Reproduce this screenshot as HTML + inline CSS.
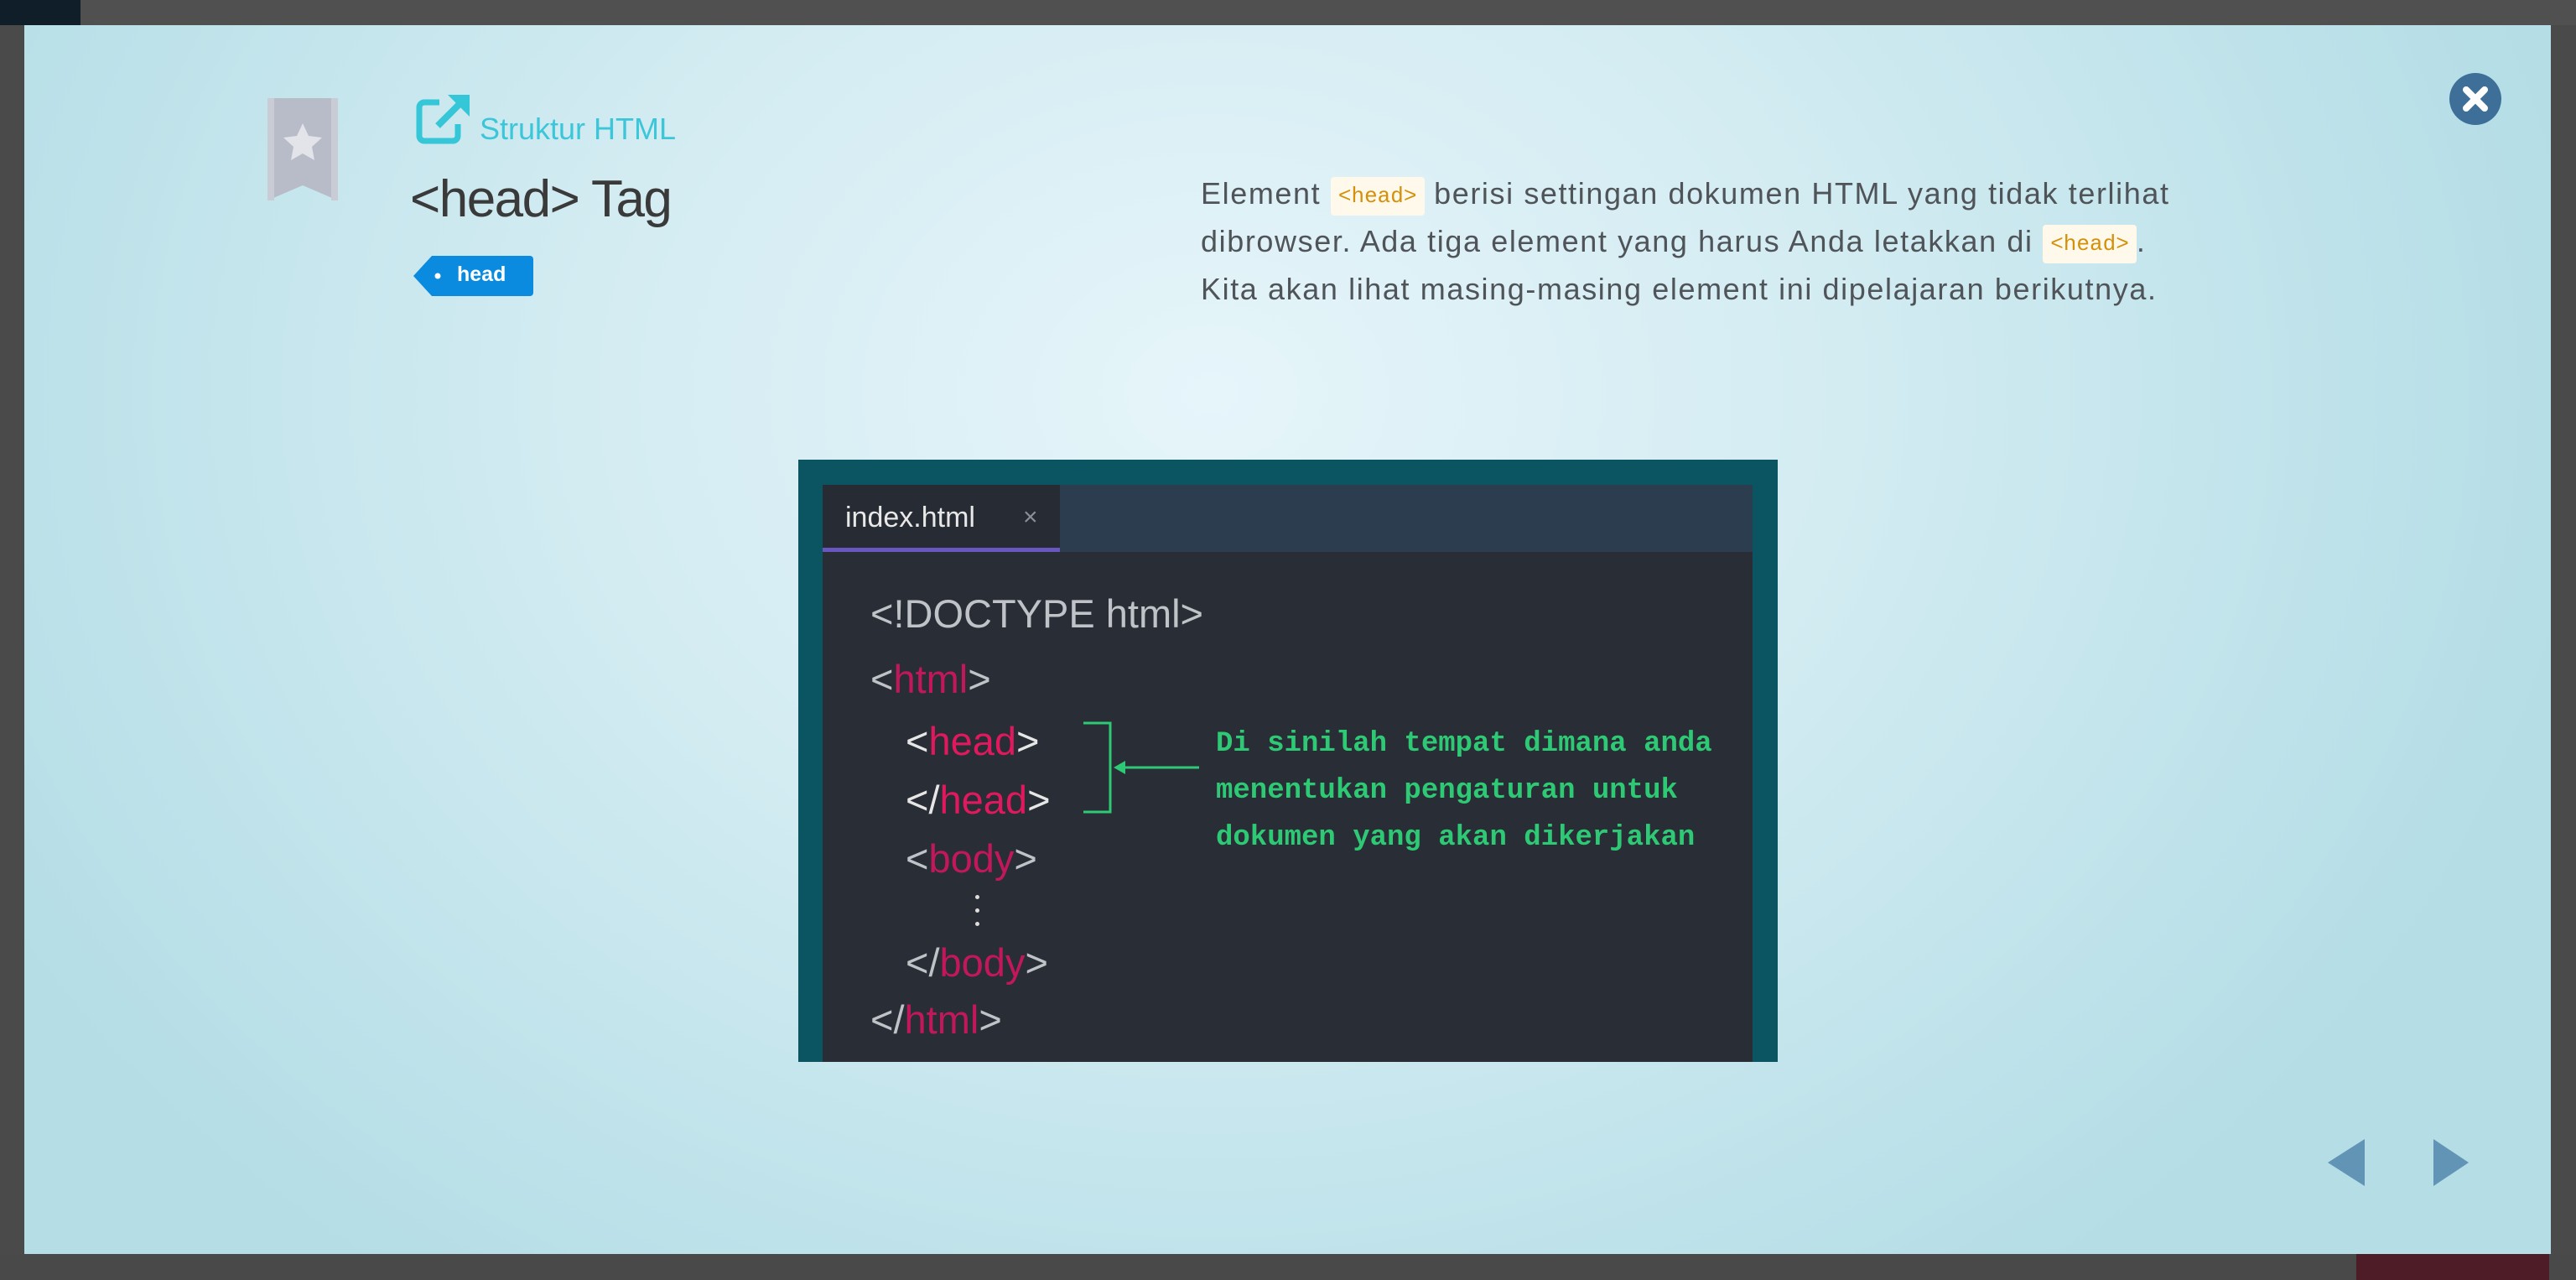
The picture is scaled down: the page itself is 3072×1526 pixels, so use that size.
<!DOCTYPE html>
<html><head><meta charset="utf-8"><style>
*{margin:0;padding:0;box-sizing:border-box}
body{width:3072px;height:1526px;overflow:hidden;background:#4a4a4a;position:relative;font-family:"Liberation Sans",sans-serif}
.abs{position:absolute}
.modal{left:29px;top:30px;width:3013px;height:1465px;background:radial-gradient(ellipse 55% 90% at 47% 30%,#e6f5fa 0%,#d3ecf2 45%,#b4dde6 100%)}
.p{left:1432px;top:202px;width:1260px;font-size:36px;line-height:57px;color:#4f5459;letter-spacing:1.6px}
.c{font-family:"Liberation Mono",monospace;font-size:26px;line-height:1;color:#d4900a;background:#fff9ec;padding:10px 9px;border-radius:4px;letter-spacing:0;display:inline-block;vertical-align:2px}
.code{font-size:47px;color:#bfc2c7;position:absolute;white-space:pre}
.r{color:#c2185b}
.g{position:absolute;left:1450px;font-family:"Liberation Mono",monospace;font-weight:bold;font-size:34px;color:#2ec974;white-space:pre}
</style></head><body>
<div class="abs" style="left:0;top:0;width:3072px;height:30px;background:#505050"></div>
<div class="abs" style="left:0;top:0;width:96px;height:30px;background:#0f1e28"></div>
<div class="abs" style="left:0;top:1495px;width:3072px;height:31px;background:#494949"></div>
<div class="abs" style="left:2810px;top:1495px;width:230px;height:31px;background:#4e1c26"></div>
<div class="abs modal"></div>

<svg class="abs" style="left:319px;top:117px" width="84" height="122" viewBox="0 0 84 122">
<path d="M0 0H84V122L42 104L0 122Z" fill="#b8bcc8"/>
<path d="M0 0H8V122H0ZM76 0H84V122H76Z" fill="#c9ccd4"/>
<path d="M42 30l7 15 16 2-12 11 3 16-14-8-14 8 3-16-12-11 16-2z" fill="#e2e4ea"/>
</svg>
<svg class="abs" style="left:494px;top:110px" width="68" height="64" viewBox="0 0 68 64">
<path d="M30 12H12a6 6 0 0 0-6 6v34a6 6 0 0 0 6 6h34a6 6 0 0 0 6-6V38" fill="none" stroke="#35c6d8" stroke-width="7"/>
<path d="M28 40L58 10" stroke="#35c6d8" stroke-width="8"/>
<path d="M40 3H66V29Z" fill="#35c6d8"/>
</svg>
<div class="abs" style="left:572px;top:133px;font-size:36px;color:#3cc6da">Struktur HTML</div>
<div class="abs" style="left:489px;top:202px;font-size:62px;color:#3a3a3a;letter-spacing:-1.5px">&lt;head&gt; Tag</div>
<svg class="abs" style="left:493px;top:305px" width="143" height="48" viewBox="0 0 143 48">
<path d="M22 0H139a4 4 0 0 1 4 4V44a4 4 0 0 1-4 4H22L0 24Z" fill="#0a8be0"/>
<circle cx="29" cy="24" r="3.5" fill="#fff"/>
</svg>
<div class="abs" style="left:545px;top:307px;font-size:25px;font-weight:bold;color:#fff;line-height:40px">head</div>

<div class="abs p">Element <span class="c">&lt;head&gt;</span> berisi settingan dokumen HTML yang tidak terlihat dibrowser. Ada tiga element yang harus Anda letakkan di <span class="c">&lt;head&gt;</span>.<br>Kita akan lihat masing-masing element ini dipelajaran berikutnya.</div>

<svg class="abs" style="left:2920px;top:86px" width="64" height="64" viewBox="0 0 64 64">
<circle cx="32" cy="32" r="31" fill="#3d6f99"/>
<path d="M21 21L43 43M43 21L21 43" stroke="#fff" stroke-width="8" stroke-linecap="round"/>
</svg>

<div class="abs" style="left:952px;top:548px;width:1168px;height:718px;background:#0b5563"></div>
<div class="abs" style="left:981px;top:578px;width:1109px;height:688px;background:#292d35"></div>
<div class="abs" style="left:981px;top:578px;width:1109px;height:80px;background:#2b3d4f"></div>
<div class="abs" style="left:981px;top:578px;width:283px;height:80px;background:#272b33"></div>
<div class="abs" style="left:981px;top:653px;width:283px;height:5px;background:#6a56c0"></div>
<div class="abs" style="left:1008px;top:598px;font-size:34px;color:#e8e8e8">index.html</div>
<div class="abs" style="left:1220px;top:600px;font-size:30px;color:#8a8f98">×</div>

<div class="code" style="left:1038px;top:704px">&lt;!DOCTYPE html&gt;</div>
<div class="code" style="left:1038px;top:782px">&lt;<span class="r">html</span>&gt;</div>
<div class="code" style="left:1080px;top:856px;color:#e6e6e6">&lt;<span class="r" style="color:#e0195e">head</span>&gt;</div>
<div class="code" style="left:1080px;top:926px;color:#e6e6e6">&lt;/<span class="r" style="color:#e0195e">head</span>&gt;</div>
<div class="code" style="left:1080px;top:996px">&lt;<span class="r">body</span>&gt;</div>
<div class="abs" style="left:1163px;top:1067px;width:5px;height:5px;border-radius:50%;background:#ddd;box-shadow:0 16px 0 #ddd,0 32px 0 #ddd"></div>
<div class="code" style="left:1080px;top:1120px">&lt;/<span class="r">body</span>&gt;</div>
<div class="code" style="left:1038px;top:1188px">&lt;/<span class="r">html</span>&gt;</div>

<svg class="abs" style="left:1290px;top:860px" width="160" height="112" viewBox="0 0 160 112">
<path d="M2 2H34V108H2" fill="none" stroke="#2ec974" stroke-width="3"/>
<path d="M44 55H140" stroke="#2ec974" stroke-width="3"/>
<path d="M38 55L52 47V63Z" fill="#2ec974"/>
</svg>
<div class="g" style="top:868px">Di sinilah tempat dimana anda</div>
<div class="g" style="top:924px">menentukan pengaturan untuk</div>
<div class="g" style="top:980px">dokumen yang akan dikerjakan</div>

<svg class="abs" style="left:2776px;top:1358px" width="170" height="56" viewBox="0 0 170 56">
<path d="M44 0V56L0 28Z" fill="#6294b6"/>
<path d="M126 0V56L168 28Z" fill="#6294b6"/>
</svg>
</body></html>
